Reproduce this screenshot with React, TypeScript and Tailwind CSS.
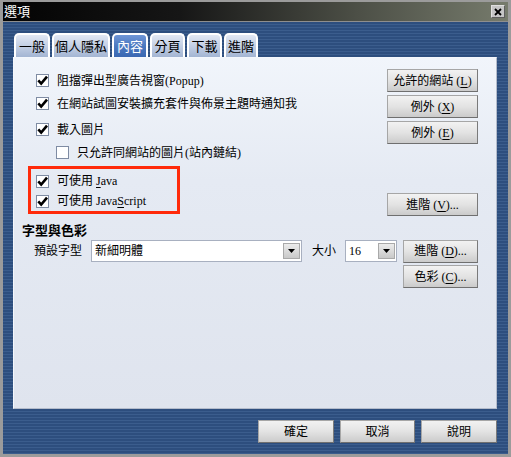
import React from "react";

const FONT = "font-['Liberation_Serif','Noto_Sans_CJK_TC',serif]";

const Check = ({ checked }: { checked: boolean }) => (
  <span className="flex h-[13px] w-[13px] shrink-0 items-center justify-center border border-[#7f8ca3] bg-white">
    {checked && (
      <svg width="11" height="11" viewBox="0 0 11 11" aria-hidden="true">
        <path d="M1.3 5.3 L4.2 8.6 L10 1.6" fill="none" stroke="#000" strokeWidth="2.6" />
      </svg>
    )}
  </span>
);

function CheckRow({ children, checked = true, indent = false, h = "h-[23px]" }: {
  children: React.ReactNode; checked?: boolean; indent?: boolean; h?: string;
}) {
  return (
    <div className={`flex items-center ${h} ${indent ? "ml-[20px]" : ""}`}>
      <Check checked={checked} />
      <span className="ml-[8px] whitespace-nowrap text-[12px] leading-none text-black">{children}</span>
    </div>
  );
}

function Btn({ children, w = "w-[91px]" }: { children: React.ReactNode; w?: string }) {
  return (
    <button className={`${w} flex h-[23px] items-center justify-center border border-[#a6a6a6] border-b-[#6f6f6f] border-r-[#7a7a7a] bg-[linear-gradient(180deg,#f2f2f2_0%,#e3e3e3_50%,#cbcbcb_100%)] text-[12px] leading-none text-black`}>
      {children}
    </button>
  );
}

const U = ({ c }: { c: string }) => <span className="underline underline-offset-2">{c}</span>;

const Arrow = () => (
  <span className="flex h-[16px] w-[17px] items-center justify-center border border-[#a9a9a9] bg-[linear-gradient(180deg,#ececec,#c9c9c9)]">
    <svg width="7" height="4" viewBox="0 0 7 4" aria-hidden="true">
      <polygon points="0,0 7,0 3.5,4" fill="#000" />
    </svg>
  </span>
);

function Select({ value, w }: { value: string; w: string }) {
  return (
    <div className={`${w} flex h-[22px] items-center justify-between border border-[#a8b0c0] bg-white pl-[3px] pr-[1px]`}>
      <span className="text-[12px] leading-none text-black">{value}</span>
      <Arrow />
    </div>
  );
}

const tabs = ["一般", "個人隱私", "內容", "分頁", "下載", "進階"];
const tabW = ["w-[36px]", "w-[58px]", "w-[36px]", "w-[35px]", "w-[35px]", "w-[34px]"];

export default function App() {
  return (
    <div className={`${FONT} flex h-[457px] w-[511px] flex-col bg-[#9b9b9b] px-[3px] pb-[3px] pt-[2px]`}>
      {/* Title bar */}
      <div className="flex h-[20px] shrink-0 items-center justify-between border-b border-[#8e8e8e] bg-[linear-gradient(90deg,#030303_0%,#161616_35%,#4c4f46_70%,#767b6c_100%)] pl-[1px] pr-[3px]">
        <span className="text-[13px] leading-none text-white">選項</span>
        <button className="flex h-[13px] w-[14px] items-center justify-center border border-[#5e5e5e] border-l-[#e0e0e0] border-t-[#e0e0e0] bg-[#c6c6c6]">
          <svg width="8" height="8" viewBox="0 0 8 8" aria-hidden="true">
            <path d="M1 1 L7 7 M7 1 L1 7" stroke="#000" strokeWidth="1.8" />
          </svg>
        </button>
      </div>

      {/* Body */}
      <div className="flex flex-1 flex-col bg-[repeating-linear-gradient(180deg,#2d4e7e_0px,#2d4e7e_2px,#3b5d8d_2px,#3b5d8d_3px)] pl-[10px] pr-[11px] pt-[11px]">
        {/* Tabs */}
        <div className="flex h-[24px] gap-[2px] pl-[1px]">
          {tabs.map((t, i) => (
            <div
              key={t}
              className={`${tabW[i]} flex items-center justify-center rounded-t-[5px] border-2 border-b-0 border-white pt-[1px] text-[13px] leading-none ${
                i === 2
                  ? "bg-[linear-gradient(180deg,#6f96d6_0%,#4a78c0_50%,#3a68b2_100%)] text-white"
                  : "bg-[linear-gradient(180deg,#e2e8f4_0%,#c3cfe4_50%,#a3b5d3_100%)] text-black"
              }`}
            >
              {t}
            </div>
          ))}
        </div>

        {/* Panel */}
        <div className="flex h-[352px] w-[484px] flex-col border border-b-[#b4bccb] border-l-[#f4f7fc] border-r-[#b4bccb] border-t-[#f4f7fc] bg-[linear-gradient(180deg,#f1f5fb_0%,#e5eaf3_35%,#dfe4ee_100%)]">
          <div className="flex justify-between pl-[22px] pr-[18px] pt-[11px]">
            <div className="flex flex-col">
              <CheckRow>阻擋彈出型廣告視窗(Popup)</CheckRow>
              <CheckRow>在網站試圖安裝擴充套件與佈景主題時通知我</CheckRow>
              <div className="mt-[3px]">
                <CheckRow>載入圖片</CheckRow>
              </div>
              <CheckRow checked={false} indent>只允許同網站的圖片(站內鏈結)</CheckRow>
              <div className="-ml-[8px] mt-[2px] w-[152px] border-[3px] border-[#ff2a0a] pl-[5px] pt-[2px]">
                <CheckRow h="h-[20px]">可使用 <U c="J" />ava</CheckRow>
                <CheckRow h="h-[20px]">可使用 Java<U c="S" />cript</CheckRow>
              </div>
            </div>
            <div className="flex flex-col gap-[3px]">
              <Btn>允許的網站 (<U c="L" />)</Btn>
              <Btn>例外 (<U c="X" />)</Btn>
              <Btn>例外 (<U c="E" />)</Btn>
              <div className="mt-[46px]">
                <Btn>進階 (<U c="V" />)...</Btn>
              </div>
            </div>
          </div>

          <div className="mt-[6px] flex h-[16px] items-center pl-[8px] text-[13px] font-bold leading-none text-black">
            字型與色彩
          </div>

          <div className="mt-[1px] flex h-[24px] items-center pl-[20px]">
            <span className="w-[57px] text-[12px] leading-none text-black">預設字型</span>
            <Select value="新細明體" w="w-[211px]" />
            <span className="ml-[10px] w-[33px] text-[12px] leading-none text-black">大小</span>
            <Select value="16" w="w-[52px]" />
            <div className="ml-[6px]">
              <Btn w="w-[75px]">進階 (<U c="D" />)...</Btn>
            </div>
          </div>
          <div className="mt-[2px] flex justify-end pr-[18px]">
            <Btn w="w-[75px]">色彩 (<U c="C" />)...</Btn>
          </div>
        </div>

        {/* Bottom buttons */}
        <div className="mt-[11px] flex justify-end gap-[6px]">
          <Btn w="w-[76px]">確定</Btn>
          <Btn w="w-[75px]">取消</Btn>
          <Btn w="w-[76px]">說明</Btn>
        </div>
      </div>
    </div>
  );
}
